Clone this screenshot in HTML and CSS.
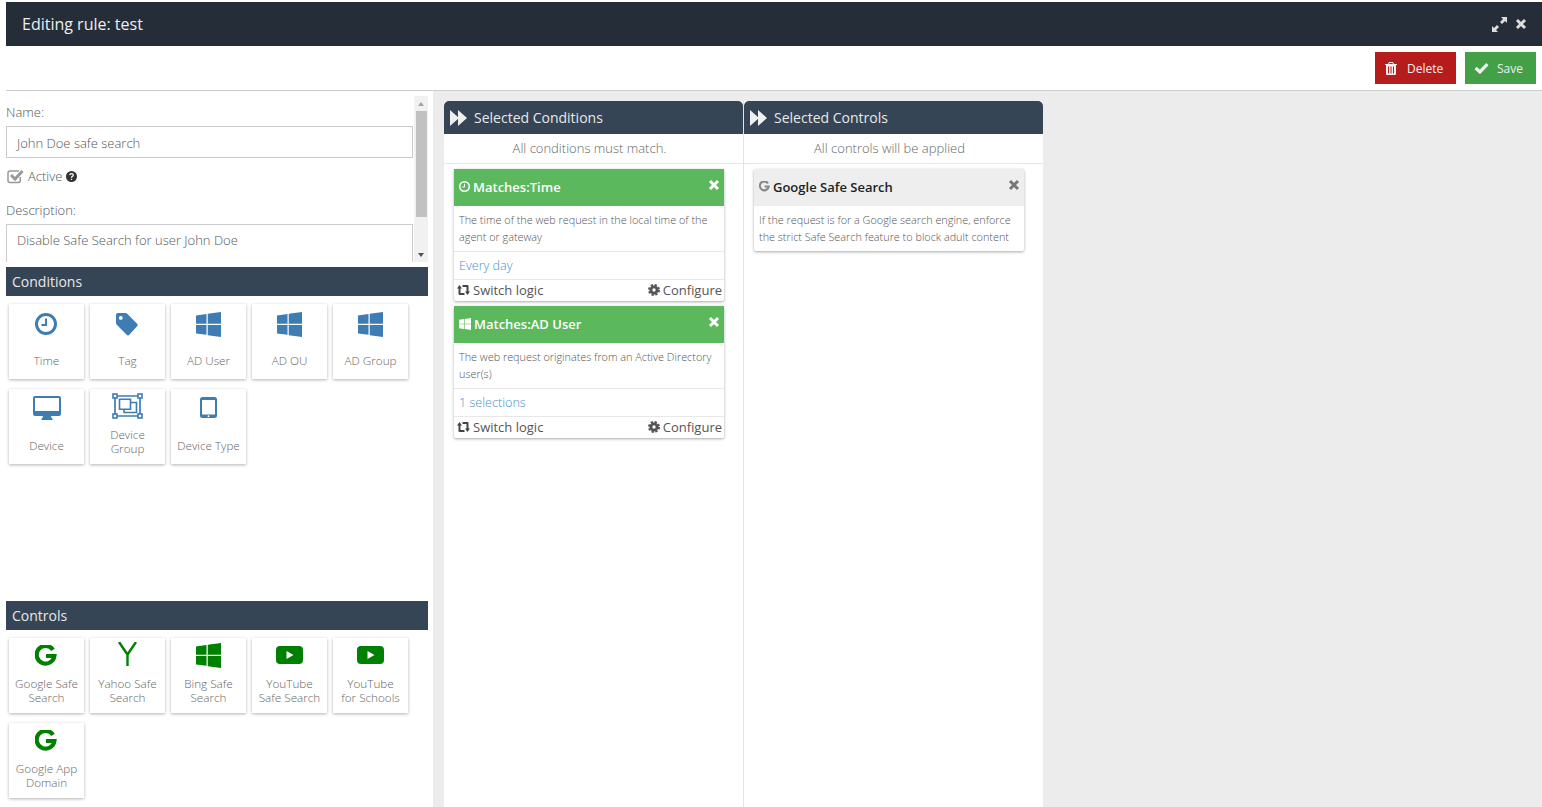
FILE: index.html
```html
<!DOCTYPE html>
<html lang="en">
<head>
<meta charset="utf-8">
<title>Editing rule: test</title>
<link rel="stylesheet" href="styles.css">
</head>
<body>
<svg class="defs" width="0" height="0" aria-hidden="true">
  <symbol id="i-clock" viewBox="0 0 22 22"><circle cx="11" cy="11" r="9.500" fill="none" stroke="currentColor" stroke-width="3"/><path d="M11 5.500v6.500H6.500" fill="none" stroke="currentColor" stroke-width="2"/></symbol>
  <symbol id="i-tag" viewBox="0 0 22 23"><path fill-rule="evenodd" d="M2 0h7.500q1 0 2 1l9.600 9.700q1.200 1.300 0 2.600l-7.800 8.500q-1.300 1.300-2.600 0L1 12q-1-1-1-2V2q0-2 2-2zM4.800 3a1.900 1.900 0 1 0 0 3.800 1.900 1.900 0 0 0 0-3.800z" fill="currentColor"/></symbol>
  <symbol id="i-win" viewBox="0 0 24.500 24.500"><path d="M0 3.500 10.300 2v9.500H0zM11.500 1.800 24.500 0v11.500h-13zM0 12.700h10.300v9.700L0 21zM11.500 12.700h13v11.800l-13-1.800z" fill="currentColor"/></symbol>
  <symbol id="i-desk" viewBox="0 0 28 24"><path fill-rule="evenodd" d="M2 0h24q2 0 2 2v16q0 2-2 2h-8q0 2 1.500 2.500V24H8.500v-1.500Q10 22 10 20H2q-2 0-2-2V2q0-2 2-2zm0 2v13h24V2z" fill="currentColor"/></symbol>
  <symbol id="i-group" viewBox="0 0 31 26"><path fill="none" stroke="currentColor" stroke-width="1.700" d="M3 3h25v20H3z"/><path fill="none" stroke="currentColor" stroke-width="1.600" d="M12 9.500h12.500v10H12z"/><path fill="#fff" stroke="currentColor" stroke-width="1.600" d="M7.500 6.300H18.500v10H7.500z"/><g fill="#fff" stroke="currentColor" stroke-width="1.600"><rect x="1" y="1" width="4" height="4"/><rect x="26" y="1" width="4" height="4"/><rect x="1" y="21" width="4" height="4"/><rect x="26" y="21" width="4" height="4"/></g></symbol>
  <symbol id="i-tablet" viewBox="0 0 17 21"><path fill-rule="evenodd" d="M2.500 0h12Q17 0 17 2.500v16q0 2.500-2.500 2.500h-12Q0 21 0 18.500v-16Q0 0 2.500 0zM2 3v14.500h13V3zm6.500 15.300a.9.9 0 1 0 0 1.800.9.9 0 0 0 0-1.800z" fill="currentColor"/></symbol>
  <symbol id="i-g" viewBox="0 0 22 22"><path d="M18 4.800A8.900 8.900 0 1 0 19.400 11H11" fill="none" stroke="currentColor" stroke-width="4.200"/></symbol>
  <symbol id="i-y" viewBox="0 0 19 24"><path d="M1 0l8.500 12.500L18 0M9.500 12.500V24" fill="none" stroke="currentColor" stroke-width="2.400"/></symbol>
  <symbol id="i-yt" viewBox="0 0 27 18"><path fill-rule="evenodd" d="M4 0h19q4 0 4 4v10q0 4-4 4H4q-4 0-4-4V4q0-4 4-4zm6.500 5v8l7-4z" fill="currentColor"/></symbol>
  <symbol id="i-x" viewBox="0 0 12 12"><path d="M2 2l8 8M10 2l-8 8" fill="none" stroke="currentColor" stroke-width="3"/></symbol>
  <symbol id="i-expand" viewBox="0 0 15 15"><path d="M9 0h6v6l-2-2-3 3-2-2 3-3zM0 9l2 2 3-3 2 2-3 3 2 2H0z" fill="currentColor"/></symbol>
  <symbol id="i-trash" viewBox="0 0 12 13"><path fill-rule="evenodd" d="M4 0h4l1 2h3v1h-1v9q0 1-1 1H2q-1 0-1-1V3H0V2h3zm.5 1-.4 1h3.800l-.4-1zM3 4.500v7h1v-7zm2.500 0v7h1v-7zm2.500 0v7h1v-7z" fill="currentColor"/></symbol>
  <symbol id="i-check" viewBox="0 0 14 11"><path d="M1.500 5.500 5.500 9.200 12.500 1.800" fill="none" stroke="currentColor" stroke-width="3"/></symbol>
  <symbol id="i-ff" viewBox="0 0 17 16"><path d="M0 0l9 8-9 8zM8 0l9 8-9 8z" fill="currentColor"/></symbol>
  <symbol id="i-retweet" viewBox="0 0 13 10"><path d="M2.500 0 5 3.500H3.500V8H7.500V10H2.500Q1.500 10 1.500 9V3.500H0zM10.500 10 8 6.500H9.500V2H5.500V0H10.500Q11.500 0 11.500 1V6.500H13z" fill="currentColor"/></symbol>
  <symbol id="i-cog" viewBox="0 0 12 12"><circle cx="6" cy="6" r="3.100" fill="none" stroke="currentColor" stroke-width="2.800"/><circle cx="6" cy="6" r="5" fill="none" stroke="currentColor" stroke-width="2" stroke-dasharray="2.300 1.630"/></symbol>
  <symbol id="i-help" viewBox="0 0 11 11"><circle cx="5.500" cy="5.500" r="5.500" fill="currentColor"/><path d="M3.700 4.100Q3.900 2.600 5.500 2.600 7.300 2.600 7.300 4 7.300 4.900 6.300 5.300 5.500 5.700 5.500 6.700M5.500 7.700v1.300" fill="none" stroke="#fff" stroke-width="1.300"/></symbol>
  <symbol id="i-checkbox" viewBox="0 0 17 16"><path d="M13.300 9v3.500q0 2-2 2H3q-2 0-2-2V5q0-2 2-2h9" fill="none" stroke="currentColor" stroke-width="1.500"/><path d="M4 7 8 11 15.500 3" fill="none" stroke="currentColor" stroke-width="3"/></symbol>
</svg>

<header class="titlebar">
  <h1 class="titlebar-text">Editing rule: test</h1>
  <div class="titlebar-tools">
    <svg class="ic-expand"><use href="#i-expand"/></svg>
    <svg class="ic-close"><use href="#i-x"/></svg>
  </div>
</header>

<div class="toolbar">
  <button class="btn btn-delete"><svg class="ic-trash"><use href="#i-trash"/></svg>Delete</button>
  <button class="btn btn-save"><svg class="ic-check"><use href="#i-check"/></svg>Save</button>
</div>

<main class="workspace">
  <aside class="sidebar">
    <div class="form-scroll">
      <form class="form">
        <label class="field-label">Name:</label>
        <div class="input">John Doe safe search</div>
        <div class="active-row">
          <svg class="ic-checkbox"><use href="#i-checkbox"/></svg>
          <span>Active</span>
          <svg class="ic-help"><use href="#i-help"/></svg>
        </div>
        <label class="field-label field-label-desc">Description:</label>
        <div class="input textarea">Disable Safe Search for user John Doe</div>
      </form>
      <div class="scrollbar">
        <span class="arrow-up"></span>
        <span class="thumb"></span>
        <span class="arrow-down"></span>
      </div>
    </div>

    <section class="palette palette-conditions">
      <h2 class="palette-title">Conditions</h2>
      <div class="tiles">
        <div class="tile"><div class="tile-icon"><svg class="i-clock"><use href="#i-clock"/></svg></div><div class="tile-label single">Time</div></div>
        <div class="tile"><div class="tile-icon"><svg class="i-tag"><use href="#i-tag"/></svg></div><div class="tile-label single">Tag</div></div>
        <div class="tile"><div class="tile-icon"><svg class="i-win"><use href="#i-win"/></svg></div><div class="tile-label single">AD User</div></div>
        <div class="tile"><div class="tile-icon"><svg class="i-win"><use href="#i-win"/></svg></div><div class="tile-label single">AD OU</div></div>
        <div class="tile"><div class="tile-icon"><svg class="i-win"><use href="#i-win"/></svg></div><div class="tile-label single">AD Group</div></div>
        <div class="tile"><div class="tile-icon raised"><svg class="i-desk"><use href="#i-desk"/></svg></div><div class="tile-label single">Device</div></div>
        <div class="tile"><div class="tile-icon higher"><svg class="i-group"><use href="#i-group"/></svg></div><div class="tile-label">Device Group</div></div>
        <div class="tile"><div class="tile-icon raised"><svg class="i-tablet"><use href="#i-tablet"/></svg></div><div class="tile-label single">Device Type</div></div>
      </div>
    </section>

    <section class="palette palette-controls">
      <h2 class="palette-title">Controls</h2>
      <div class="tiles tiles-green">
        <div class="tile"><div class="tile-icon lower-g"><svg class="i-g"><use href="#i-g"/></svg></div><div class="tile-label">Google Safe Search</div></div>
        <div class="tile"><div class="tile-icon highest"><svg class="i-y"><use href="#i-y"/></svg></div><div class="tile-label">Yahoo Safe Search</div></div>
        <div class="tile"><div class="tile-icon higher"><svg class="i-win"><use href="#i-win"/></svg></div><div class="tile-label">Bing Safe Search</div></div>
        <div class="tile"><div class="tile-icon higher"><svg class="i-yt"><use href="#i-yt"/></svg></div><div class="tile-label">YouTube Safe Search</div></div>
        <div class="tile"><div class="tile-icon higher"><svg class="i-yt"><use href="#i-yt"/></svg></div><div class="tile-label">YouTube<br>for Schools</div></div>
        <div class="tile"><div class="tile-icon lower-g"><svg class="i-g"><use href="#i-g"/></svg></div><div class="tile-label">Google App Domain</div></div>
      </div>
    </section>
  </aside>

  <div class="columns">
    <section class="column">
      <h2 class="column-head"><svg class="ic-ff"><use href="#i-ff"/></svg>Selected Conditions</h2>
      <p class="column-sub">All conditions must match.</p>
      <div class="column-body">
        <article class="card">
          <header class="card-head"><svg class="ci-clock"><use href="#i-clock"/></svg><span>Matches:Time</span><svg class="card-x"><use href="#i-x"/></svg></header>
          <p class="card-desc">The time of the web request in the local time of the agent or gateway</p>
          <div class="card-value">Every day</div>
          <footer class="card-foot">
            <span class="foot-item"><svg class="ic-retweet"><use href="#i-retweet"/></svg>Switch logic</span>
            <span class="foot-item"><svg class="ic-cog"><use href="#i-cog"/></svg>Configure</span>
          </footer>
        </article>
        <article class="card">
          <header class="card-head"><svg class="ci-win"><use href="#i-win"/></svg><span>Matches:AD User</span><svg class="card-x"><use href="#i-x"/></svg></header>
          <p class="card-desc">The web request originates from an Active Directory user(s)</p>
          <div class="card-value">1 selections</div>
          <footer class="card-foot">
            <span class="foot-item"><svg class="ic-retweet"><use href="#i-retweet"/></svg>Switch logic</span>
            <span class="foot-item"><svg class="ic-cog"><use href="#i-cog"/></svg>Configure</span>
          </footer>
        </article>
      </div>
    </section>

    <section class="column">
      <h2 class="column-head"><svg class="ic-ff"><use href="#i-ff"/></svg>Selected Controls</h2>
      <p class="column-sub">All controls will be applied</p>
      <div class="column-body">
        <article class="card card-control">
          <header class="card-head"><svg class="ci-g"><use href="#i-g"/></svg><span>Google Safe Search</span><svg class="card-x"><use href="#i-x"/></svg></header>
          <p class="card-desc">If the request is for a Google search engine, enforce the strict Safe Search feature to block adult content</p>
        </article>
      </div>
    </section>
  </div>
</main>
</body>
</html>
```

FILE: styles.css
```css
* { box-sizing: border-box; }

html, body { height: 100%; }

body {
  margin: 0;
  padding-top: 2px;
  background: #fff;
  font-family: "Open Sans", "Liberation Sans", sans-serif;
  color: #666;
  overflow: hidden;
  display: flex;
  flex-direction: column;
}

.defs { position: absolute; }

svg { display: block; flex: none; }

.titlebar {
  margin-left: 6px;
  height: 44px;
  flex: none;
  background: #252d38;
  color: #eee;
  display: flex;
  align-items: center;
  justify-content: space-between;
  padding: 0 15px 0 16px;
}

.titlebar-text { margin: 0; font-size: 16px; font-weight: 400; }

.titlebar-tools { display: flex; align-items: center; gap: 8px; }

.ic-expand { width: 15px; height: 15px; color: #ddd; }
.ic-close { width: 12px; height: 12px; color: #ddd; }

.toolbar {
  height: 45px;
  flex: none;
  display: flex;
  justify-content: flex-end;
  align-items: flex-start;
  gap: 9px;
  padding: 6px 6px 0 0;
  border-bottom: 1px solid #ccc;
  margin-left: 6px;
}

.btn {
  height: 32px;
  border: 0;
  padding: 0 13px 0 10px;
  display: flex;
  align-items: center;
  gap: 10px;
  font: 400 12px "Open Sans", sans-serif;
  color: #eee;
}

.btn-delete { width: 81px; background: #b71c1c; }
.btn-save { width: 71px; background: #43a047; padding-left: 9px; gap: 8px; }

.ic-trash { width: 12px; height: 13px; }
.ic-check { width: 15px; height: 12px; }

.workspace {
  flex: 1;
  min-height: 0;
  display: flex;
  background: #ececec;
}

.sidebar {
  width: 433px;
  flex: none;
  background: #fff;
  padding: 5px 5px 0 6px;
  display: flex;
  flex-direction: column;
}

.form-scroll {
  height: 166px;
  margin-bottom: 5px;
  flex: none;
  display: flex;
  overflow: hidden;
}

.form { width: 408px; flex: none; }

.field-label {
  display: block;
  margin: 8px 0 0;
  height: 22px;
  line-height: 17px;
  font-size: 13px;
  font-weight: 300;
  color: #555;
}

.field-label-desc { margin-top: 17px; height: 22px; }

.input {
  width: 407px;
  height: 32px;
  border: 1px solid #ccc;
  padding: 0 10px;
  line-height: 32px;
  font-size: 13px;
  font-weight: 300;
  color: #555;
}

.textarea { height: 50px; line-height: 31px; }

.active-row {
  margin-top: 9px;
  height: 18px;
  display: flex;
  align-items: center;
  gap: 4px;
  font-size: 13px;
  font-weight: 300;
  color: #555;
}

.ic-checkbox { width: 17px; height: 16px; margin-left: 1px; color: #999; }
.ic-help { width: 11px; height: 11px; color: #333; }

.scrollbar {
  width: 14px;
  height: 166px;
  flex: none;
  background: #f1f1f1;
  display: flex;
  flex-direction: column;
  align-items: center;
}

.arrow-up, .arrow-down {
  width: 0;
  height: 0;
  border-left: 3.500px solid transparent;
  border-right: 3.500px solid transparent;
}

.arrow-up { margin-top: 6px; border-bottom: 4px solid #a3a3a3; }
.arrow-down { margin-top: 36px; border-top: 4px solid #505050; }

.thumb { width: 11px; height: 106px; margin-top: 5px; background: #c1c1c1; }

.palette-conditions { height: 334px; flex: none; }

.palette-title {
  margin: 0;
  height: 29px;
  padding-left: 6px;
  background: #354555;
  color: #e8e8e8;
  font-size: 14px;
  font-weight: 400;
  line-height: 29px;
}

.tiles {
  display: grid;
  grid-template-columns: repeat(5, 75px);
  grid-auto-rows: 75px;
  gap: 10px 6px;
  padding: 8px 3px;
  color: #3e7cb4;
}

.tiles-green { color: #008000; }

.tile {
  background: #fff;
  box-shadow: 0 1px 3px rgba(0, 0, 0, .3);
  display: flex;
  flex-direction: column;
  align-items: center;
  text-align: center;
}

.tile-icon {
  height: 38px;
  width: 100%;
  flex: none;
  display: flex;
  align-items: center;
  justify-content: center;
  padding-top: 2px;
}

.tile-icon.raised { padding: 0 0 1px; }
.tile-icon.higher { padding: 0 0 4px; }
.tile-icon.lower-g { padding: 0 0 3px; }
.tile-icon.highest { padding: 0 0 6px; }

.tile-label {
  font-size: 11.700px;
  font-weight: 300;
  line-height: 14px;
  color: #666;
  padding: 0 3px;
}

.tile-label.single { padding-top: 11px; white-space: nowrap; }

.i-clock { width: 22px; height: 22px; margin-right: 1px; }
.i-tag { width: 22px; height: 23px; margin-right: 1px; }
.i-win { width: 25px; height: 25px; }
.i-desk { width: 28px; height: 24px; }
.i-group { width: 31px; height: 26px; }
.i-tablet { width: 17px; height: 21px; }
.i-g { width: 22px; height: 22px; margin-right: 1px; }
.i-y { width: 19px; height: 24px; }
.i-yt { width: 27px; height: 18px; }

.columns { display: flex; padding: 10px 0 0 11px; }

.column {
  width: 300px;
  background: #fff;
  display: flex;
  flex-direction: column;
  border-right: 1px solid #e4e4e4;
}

.column:last-child { width: 299px; border-right: 0; }

.column-head {
  margin: 0;
  height: 33px;
  flex: none;
  display: flex;
  align-items: center;
  gap: 7px;
  padding-left: 6px;
  background: #354555;
  border-radius: 5px 5px 0 0;
  color: #e8e8e8;
  font-size: 14px;
  font-weight: 400;
}

.ic-ff { width: 17px; height: 16px; color: #f0f0f0; }

.column-sub {
  margin: 0;
  height: 30px;
  flex: none;
  padding-right: 8px;
  line-height: 29px;
  border-bottom: 1px solid #e6e6e6;
  text-align: center;
  font-size: 13px;
  font-weight: 300;
  color: #666;
}

.column-body {
  flex: 1;
  display: flex;
  flex-direction: column;
  gap: 5px;
  padding: 5px 0 0 10px;
}

.card {
  width: 270px;
  background: #fff;
  border-radius: 2px;
  box-shadow: 0 1px 3px rgba(0, 0, 0, .35);
}

.card-head {
  height: 37px;
  padding: 0 5px 2px;
  background: #5cb85c;
  color: #fff;
  display: flex;
  align-items: center;
  gap: 3px;
  font-size: 13px;
  font-weight: 600;
}

.card-head span { flex: 1; }

.ci-clock { width: 11px; height: 11px; }
.ci-win { width: 12px; height: 12px; }
.ci-g { width: 11px; height: 11px; color: #888; }

.card-x { width: 12px; height: 12px; color: #fff; margin: -3px -1px 0 0; }

.card-desc {
  margin: 0;
  height: 46px;
  padding: 5px 5px 0;
  font-size: 10.850px;
  font-weight: 300;
  line-height: 17px;
  color: #555;
  border-bottom: 1px solid #e8e8e8;
}

.card-value {
  height: 28px;
  padding-left: 5px;
  line-height: 28px;
  font-size: 12.600px;
  font-weight: 300;
  color: #4a8fd0;
  border-bottom: 1px solid #e8e8e8;
}

.card-foot {
  height: 21px;
  padding: 0 2px 2px 3px;
  display: flex;
  align-items: center;
  justify-content: space-between;
  font-size: 13px;
  color: #555;
}

.foot-item { display: flex; align-items: center; gap: 3px; }

.ic-retweet { width: 13px; height: 10px; color: #444; }
.ic-cog { width: 12px; height: 12px; color: #555; }

.card-control .card-head { background: #eee; color: #222; }
.card-control .card-x { color: #777; }
.card-control .card-desc { border-bottom: 0; height: 45px; }
```
